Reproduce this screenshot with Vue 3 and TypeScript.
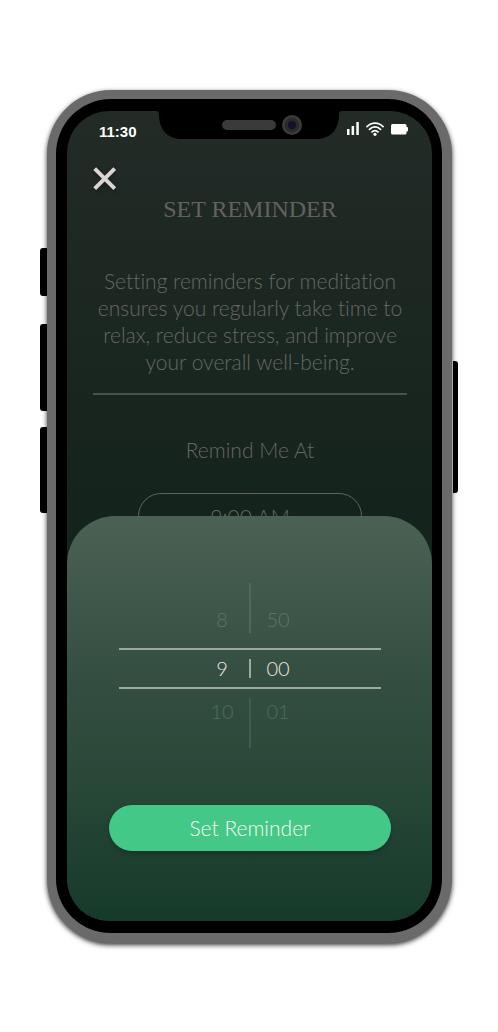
<script setup lang="ts">
import { computed, ref } from 'vue'

const hours = ['8', '9', '10']
const minutes = ['50', '00', '01']
const hourIndex = ref(1)
const minuteIndex = ref(1)
const savedTime = ref('9:00 AM')

function at(list: string[], index: number): string {
  return list[(index + list.length) % list.length]
}

const rows = computed(() =>
  [-1, 0, 1].map((step) => ({
    step,
    hour: at(hours, hourIndex.value + step),
    minute: at(minutes, minuteIndex.value + step),
  })),
)

function turnHour(step: number) {
  hourIndex.value = (hourIndex.value + step + hours.length) % hours.length
}

function turnMinute(step: number) {
  minuteIndex.value = (minuteIndex.value + step + minutes.length) % minutes.length
}

function save() {
  savedTime.value = `${at(hours, hourIndex.value)}:${at(minutes, minuteIndex.value)} AM`
}
</script>

<template>
  <div class="stage">
    <div class="phone">
      <i class="key key-mute"></i>
      <i class="key key-up"></i>
      <i class="key key-down"></i>
      <i class="key key-power"></i>

      <main class="screen">
        <svg class="notch" viewBox="0 0 186 28" aria-hidden="true">
          <path d="M0 0H186C184 0 183 1 183 3C183 18 175 28 160 28H26C11 28 3 18 3 3C3 1 2 0 0 0Z" fill="#000" />
          <rect x="66" y="9" width="54" height="10" rx="5" fill="#3a3a3a" />
          <circle cx="136" cy="14" r="10" fill="#3c3c3c" />
          <circle cx="136" cy="14" r="7.500" fill="#2b2b2b" />
          <circle cx="136" cy="14" r="4.200" fill="#12122e" />
        </svg>

        <header class="status">
          <time>11:30</time>
          <span class="signals">
            <svg width="12" height="14" viewBox="0 0 12 14" fill="#fff" aria-hidden="true">
              <rect x="0" y="7" width="2.500" height="6" rx=".5" />
              <rect x="4.600" y="4" width="2.500" height="9" rx=".5" />
              <rect x="9.300" y="0" width="2.500" height="13" rx=".5" />
            </svg>
            <svg width="18" height="14" viewBox="0 0 18 14" fill="none" stroke="#fff" stroke-width="1.800" stroke-linecap="round" aria-hidden="true">
              <path d="M1 4.600C5.500-.1 12.500-.1 17 4.600" />
              <path d="M3.500 7.300C6.500 4.100 11.500 4.100 14.500 7.300" />
              <path d="M6 9.800C7.700 8.100 10.300 8.100 12 9.800" />
              <circle cx="9" cy="12.300" r="1.600" fill="#fff" stroke="none" />
            </svg>
            <svg width="17" height="14" viewBox="0 0 17 14" fill="#fff" aria-hidden="true">
              <rect x="0" y="2" width="15.500" height="10.500" rx="1.500" />
              <rect x="14" y="5" width="3" height="4.500" rx="1" />
            </svg>
          </span>
        </header>

        <section class="content">
          <button class="close" type="button" aria-label="Close">
            <svg width="24" height="24" viewBox="0 0 24 24" stroke="#ddd5d5" stroke-width="4" aria-hidden="true">
              <path d="M1.700 1.700L21.700 21.700M21.700 1.700L1.700 21.700" />
            </svg>
          </button>
          <h1>SET REMINDER</h1>
          <p>Setting reminders for meditation ensures you regularly take time to relax, reduce stress, and improve your overall well-being.</p>
          <hr />
          <h2 id="remind-label">Remind Me At</h2>
          <button class="current" type="button" aria-describedby="remind-label">{{ savedTime }}</button>
        </section>

        <section class="sheet">
          <div class="picker" role="group" aria-label="Time">
            <div v-for="row in rows" :key="row.step" class="row" :class="{ before: row.step < 0, selected: row.step === 0, after: row.step > 0 }">
              <button type="button" @click="turnHour(row.step)">{{ row.hour }}</button>
              <i class="divider"></i>
              <button type="button" @click="turnMinute(row.step)">{{ row.minute }}</button>
            </div>
          </div>
          <button class="submit" type="button" @click="save">Set Reminder</button>
        </section>
      </main>
    </div>
  </div>
</template>

<style>
body {
  margin: 0;
  background: #fff;
}
</style>

<style scoped>
* {
  box-sizing: border-box;
}

button {
  margin: 0;
  padding: 0;
  border: 0;
  background: none;
  color: inherit;
  font: inherit;
  cursor: pointer;
}

.stage {
  display: flex;
  min-height: 100vh;
  padding: 90px 46px 89px 47px;
  font-family: Lato, "Open Sans", sans-serif;
  font-size: 21px;
  font-weight: 300;
  line-height: 27px;
  font-variant-ligatures: none;
}

.phone {
  position: relative;
  display: flex;
  flex: 1;
  padding: 12px 10px 12px 11px;
  border: solid #6a6a6a;
  border-width: 9px 10px 10px 9px;
  border-radius: 64px;
  background: #000;
  box-shadow: 0 2px 5px rgba(0, 0, 0, 0.8);
}

.key {
  position: absolute;
  left: -16px;
  width: 7px;
  border-radius: 3px 0 0 3px;
  background: #000;
}

.key-mute {
  top: 149px;
  height: 48px;
}

.key-up {
  top: 225px;
  height: 87px;
}

.key-down {
  top: 328px;
  height: 86px;
}

.key-power {
  top: 262px;
  right: -16px;
  left: auto;
  width: 5px;
  height: 132px;
  border-radius: 0 3px 3px 0;
}

.screen {
  position: relative;
  display: flex;
  flex: 1;
  flex-direction: column;
  min-height: 800px;
  overflow: hidden;
  border-radius: 42px;
  background: linear-gradient(#232b27, #14231c 50%, #14231c);
}

.notch {
  position: absolute;
  top: 0;
  left: 50%;
  width: 186px;
  height: 28px;
  margin-left: -94px;
}

.status {
  display: flex;
  align-items: center;
  justify-content: space-between;
  height: 42px;
  padding: 0 24px 0 32px;
  color: #fff;
  font: bold 15px/16px "Liberation Sans", sans-serif;
}

.signals {
  display: flex;
  gap: 7px;
  padding-bottom: 6px;
}

.content {
  display: flex;
  flex-direction: column;
  align-items: center;
  padding: 14px 25px 0 26px;
  color: #676763;
  text-align: center;
}

.close {
  align-self: flex-start;
  height: 24px;
}

.close svg {
  display: block;
  filter: drop-shadow(0 2px 2px rgba(0, 0, 0, 0.3));
}

h1 {
  margin: 4px 0 0;
  color: #62625f;
  font: 400 24px/28px "Liberation Serif", serif;
}

p {
  margin: 44px 0 0;
}

hr {
  width: 100%;
  height: 2px;
  margin: 18px 0 0;
  border: 0;
  background: #46524b;
}

h2 {
  margin: 41px 0 0;
  font: inherit;
}

.current {
  width: 224px;
  height: 47px;
  margin-top: 30px;
  border: 1px solid #62635f;
  border-radius: 23px;
}

.sheet {
  position: absolute;
  right: 0;
  bottom: 0;
  left: 0;
  display: flex;
  flex-direction: column;
  align-items: center;
  padding: 67px 41px 70px 42px;
  border-radius: 48px 48px 0 0;
  background: linear-gradient(#4b6154, #354f42 38%, #294838 65%, #163a2a);
}

.picker {
  width: 100%;
  padding: 0 10px;
  font-size: 20px;
}

.row {
  display: grid;
  grid-template-columns: 54px 2px 54px;
  justify-content: center;
  height: 50px;
  color: #5b7468;
}

.divider {
  background: #4e685b;
}

.before {
  align-items: end;
  margin-bottom: 15px;
}

.before .divider,
.after .divider {
  height: 50px;
}

.selected {
  align-items: center;
  height: 41px;
  border: solid #9ba9a0;
  border-width: 2px 0;
  color: #ebe4e1;
}

.selected .divider {
  height: 19px;
  background: #9ba9a0;
}

.after {
  align-items: start;
  margin-top: 9px;
  color: #4e6b5d;
}

.after .divider {
  background: #3f5d4f;
}

.submit {
  width: 100%;
  height: 46px;
  margin-top: 57px;
  padding-bottom: 2px;
  border-radius: 23px;
  background: #44c888;
  box-shadow: 0 3px 5px rgba(0, 0, 0, 0.2);
  color: #f8faf2;
}
</style>
